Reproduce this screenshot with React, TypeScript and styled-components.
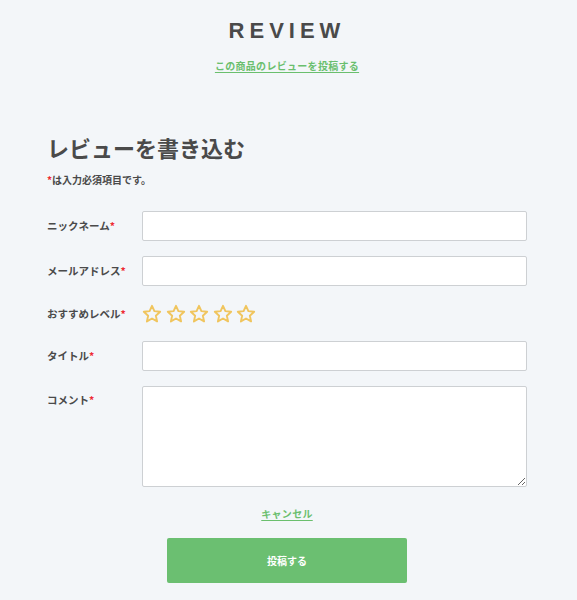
import styled, { createGlobalStyle } from "styled-components"

const GlobalStyle = createGlobalStyle`
    body {
        margin: 0;
        background: #f3f6f9;
        font-family: "Noto Sans CJK JP", "Noto Sans", sans-serif;
        color: #4a4a4a;
    }
`

const Page = styled.main`
    width: 480px;
    margin-left: 47px;
    padding-bottom: 17px;
`

const Header = styled.header`
    text-align: center;
    padding-top: 20px;
`

const Titulo = styled.h1`
    margin: 0;
    font-family: "Liberation Sans", Arial, sans-serif;
    font-size: 22px;
    line-height: 22px;
    font-weight: 700;
    letter-spacing: 5px;
    color: #4a4a4a;
`

const GreenLink = styled.a<{ $top: number }>`
    display: inline-block;
    margin-top: ${p => p.$top}px;
    font-size: 10px;
    line-height: 14px;
    font-weight: 700;
    letter-spacing: 0.3px;
    color: #6abf6e;
    text-decoration: underline;
    text-underline-offset: 2px;
    cursor: pointer;
`

const Heading = styled.h2`
    margin: 60px 0 0;
    font-size: 22px;
    line-height: 24px;
    font-weight: 700;
    color: #4a4a4a;
`

const Note = styled.p`
    margin: 14px 0 0;
    font-size: 10px;
    line-height: 14px;
    font-weight: 700;
`

const Req = styled.span`
    color: #ee2a33;
`

const Form = styled.form`
    margin-top: 24px;
    display: flex;
    flex-direction: column;
    gap: 15px;
`

const Row = styled.div`
    display: grid;
    grid-template-columns: 95px 385px;
    align-items: start;
`

const Label = styled.label<{ $h: number }>`
    font-size: 10.5px;
    font-weight: 700;
    line-height: ${p => p.$h}px;
    white-space: nowrap;
`

const Input = styled.input`
    display: block;
    box-sizing: border-box;
    width: 385px;
    height: 30px;
    border: 1px solid #cdd0d3;
    border-radius: 2px;
    background: #fff;
    outline: none;
`

const TextArea = styled.textarea`
    display: block;
    box-sizing: border-box;
    width: 385px;
    height: 101px;
    border: 1px solid #cdd0d3;
    border-radius: 2px;
    background: #fff;
    outline: none;
`

const Stars = styled.div`
    display: flex;
    align-items: center;
    gap: 3.5px;
    height: 25px;
`

const Footer = styled.div`
    display: flex;
    flex-direction: column;
    align-items: center;
`

const Submit = styled.button`
    margin-top: 17px;
    width: 240px;
    height: 45px;
    border: none;
    border-radius: 2px;
    background: #6bbf71;
    color: #fff;
    font-family: inherit;
    font-size: 10px;
    font-weight: 700;
    cursor: pointer;
`

function Star() {
    return (
        <svg width="20" height="20" viewBox="0 0 24 24">
            <polygon
                points="12,2.2 14.9,8.6 21.8,9.3 16.6,14 18.1,20.9 12,17.4 5.9,20.9 7.4,14 2.2,9.3 9.1,8.6"
                fill="none"
                stroke="#f0c55e"
                strokeWidth="2.3"
                strokeLinejoin="round"
            />
        </svg>
    )
}

function App() {
    return (
        <>
            <GlobalStyle />
            <Page>
                <Header>
                    <Titulo>REVIEW</Titulo>
                    <GreenLink $top={17}>この商品のレビューを投稿する</GreenLink>
                </Header>
                <Heading>レビューを書き込む</Heading>
                <Note><Req>*</Req>は入力必須項目です。</Note>
                <Form onSubmit={e => e.preventDefault()}>
                    <Row>
                        <Label $h={30}>ニックネーム<Req>*</Req></Label>
                        <Input type="text" />
                    </Row>
                    <Row>
                        <Label $h={30}>メールアドレス<Req>*</Req></Label>
                        <Input type="email" />
                    </Row>
                    <Row>
                        <Label $h={25}>おすすめレベル<Req>*</Req></Label>
                        <Stars>
                            {[0, 1, 2, 3, 4].map(i => <Star key={i} />)}
                        </Stars>
                    </Row>
                    <Row>
                        <Label $h={30}>タイトル<Req>*</Req></Label>
                        <Input type="text" />
                    </Row>
                    <Row>
                        <Label $h={28}>コメント<Req>*</Req></Label>
                        <TextArea />
                    </Row>
                </Form>
                <Footer>
                    <GreenLink $top={20}>キャンセル</GreenLink>
                    <Submit type="submit">投稿する</Submit>
                </Footer>
            </Page>
        </>
    )
}

export default App
